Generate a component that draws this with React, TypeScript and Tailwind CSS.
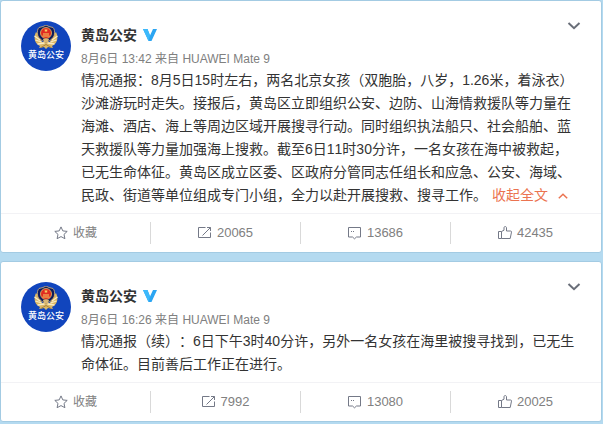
import type { ReactNode } from 'react'

type Post = {
  id: string
  time: string
  source: string
  text: string
  expanded?: boolean
  reposts: number
  comments: number
  likes: number
}

const author = '黄岛公安'

const posts: Post[] = [
  {
    id: 'first',
    time: '8月6日 13:42',
    source: 'HUAWEI Mate 9',
    text: '情况通报：8月5日15时左右，两名北京女孩（双胞胎，八岁，1.26米，着泳衣）沙滩游玩时走失。接报后，黄岛区立即组织公安、边防、山海情救援队等力量在海滩、酒店、海上等周边区域开展搜寻行动。同时组织执法船只、社会船舶、蓝天救援队等力量加强海上搜救。截至6日11时30分许，一名女孩在海中被救起，已无生命体征。黄岛区成立区委、区政府分管同志任组长和应急、公安、海域、民政、街道等单位组成专门小组，全力以赴开展搜救、搜寻工作。',
    expanded: true,
    reposts: 20065,
    comments: 13686,
    likes: 42435,
  },
  {
    id: 'second',
    time: '8月6日 16:26',
    source: 'HUAWEI Mate 9',
    text: '情况通报（续）：6日下午3时40分许，另外一名女孩在海里被搜寻找到，已无生命体征。目前善后工作正在进行。',
    reposts: 7992,
    comments: 13080,
    likes: 20025,
  },
]

function Icon({ children }: { children: ReactNode }) {
  return (
    <svg
      viewBox="0 0 14 14"
      className="h-3.5 w-3.5 shrink-0"
      fill="none"
      stroke="#747987"
      strokeWidth="1"
      aria-hidden="true"
    >
      {children}
    </svg>
  )
}

function StarIcon() {
  return (
    <Icon>
      <path d="M7 .9 8.800 4.900l4.400.5-3.200 3 .9 4.300L7 10.600l-3.900 2.100.9-4.300-3.200-3 4.400-.5z" strokeLinejoin="round" />
    </Icon>
  )
}

function RepostIcon() {
  return (
    <Icon>
      <path d="M7.500 1.500h-7v10h12v-5" />
      <path d="M9 1.500h3.500V5M12.500 1.500 4.500 9.500" />
    </Icon>
  )
}

function CommentIcon() {
  return (
    <Icon>
      <path d="M.5 1.500h12v9.500H8.500L6.500 12.800 4.500 11H.5z" />
      <path d="M3 5.500h1M5 5.500h1" />
    </Icon>
  )
}

function LikeIcon() {
  return (
    <Icon>
      <path d="M.5 5.500h3v7h-3zM3.500 5.500 6 4.200V2c0-1 .5-1.500 1.200-1.500S8.500 1 8.500 2v3h4c.8 0 1.100.5 1 1.100l-1.300 6.400H3.500" strokeLinejoin="round" />
    </Icon>
  )
}

function Avatar() {
  return (
    <a
      href="#profile"
      aria-label={author}
      className="flex h-[50px] w-[50px] shrink-0 flex-col items-center overflow-hidden rounded-full bg-[#1145bd] pt-1"
    >
      <svg viewBox="0 0 26 24" className="h-6 w-[26px] shrink-0" aria-hidden="true">
        {/* wheat wreath */}
        <path d="M3 7C0 13 2 19 7 21l-1 2 5-1 2 2 2-2 5 1-1-2c5-2 7-8 4-14l-3 3-3 7h-8L6 10z" fill="#dcb866" />
        <path d="M1.500 11l5.500 4M2.500 15l6 2M4.500 19l7-1M24.500 11 19 15M23.500 15l-6 2M21.500 19l-7-1" stroke="#f9ebc4" strokeWidth="1.300" />
        <path d="M8 22.500l5-3 5 3" fill="none" stroke="#a9813b" strokeWidth="1" />
        {/* shield */}
        <path d="M13 0 16 1.500 20 2.500c1.500 1.500 1.800 4 1.500 6.500-.5 4-4 6.500-8.500 8.500-4.500-2-8-4.500-8.500-8.500C4.200 6.500 4.500 4 6 2.500L10 1.500z" fill="#101c5c" stroke="#d9b775" strokeWidth=".8" />
        <circle cx="13" cy="8" r="5.500" fill="#e02a21" stroke="#e9c064" strokeWidth=".8" />
        <path d="M13 3.500l.6 1.300h1.400l-1.100.9.4 1.400-1.300-.8-1.300.8.400-1.400-1.100-.9h1.400zM10 8.500h6v1h-6zM9.500 10.500h7v1h-7z" fill="#f6cf62" />
        <path d="M10 14h6l-1 3h-4z" fill="#d9b775" />
      </svg>
      <span className="text-[9px] leading-3 font-medium whitespace-nowrap text-white">{author}</span>
    </a>
  )
}

function ActionButton({ icon, children }: { icon: ReactNode; children: ReactNode }) {
  return (
    <li className="flex-1 border-r border-[#d9d9d9] last:border-transparent">
      <button type="button" className="flex h-[22px] w-full items-center justify-center gap-[5px] text-[#808080]">
        {icon}
        {children}
      </button>
    </li>
  )
}

function PostCard({ post }: { post: Post }) {
  return (
    <article className="rounded-[3px] border border-[#a3cbe3] bg-white">
      <div className="flex gap-2.5 px-5 pt-5 pb-1.5">
        <Avatar />
        <div className="min-w-0 flex-1">
          <header className="flex items-start justify-between">
            <div className="flex h-7 items-center gap-1.5">
              <a href="#profile" className="text-sm leading-7 font-bold text-[#333]">
                {author}
              </a>
              <svg viewBox="0 0 14 12" className="h-3 w-3.5" role="img" aria-label="认证">
                <path d="M0 0h4.500L7 6.500 10 0h4L8.500 12h-3z" fill="#2ba5f2" />
                <path d="M0 0h4.500L7 6.500 5.500 12z" fill="#3cb9fb" />
              </svg>
            </div>
            <button type="button" aria-label="更多" className="py-px">
              <svg viewBox="0 0 14 8" className="h-2 w-3.5" fill="none" stroke="#696e78" strokeWidth="2">
                <path d="M1.500 1 7 6.200 12.500 1" />
              </svg>
            </button>
          </header>
          <p className="mt-px h-[19px] text-xs leading-[19px] text-[#808080]">
            <a href="#post">{post.time}</a> 来自 <a href="#source">{post.source}</a>
          </p>
          <div className="pr-1 text-sm leading-[23px] text-[#333] [font-kerning:none] [text-spacing-trim:space-all]">
            {post.text}
            {post.expanded && (
              <button type="button" className="ml-[5px] inline-flex h-[23px] items-center gap-2.5 align-top text-[#eb7350]">
                收起全文
                <svg
                  viewBox="0 0 10 6"
                  className="h-1.5 w-2.5"
                  fill="none"
                  stroke="#eb7350"
                  strokeWidth="1.500"
                  aria-hidden="true"
                >
                  <path d="M.8 5.200 5 1.200l4.200 4" />
                </svg>
              </button>
            )}
          </div>
        </div>
      </div>
      <ul className="flex border-t border-[#f2f2f5] py-2 text-[13px]">
        <ActionButton icon={<StarIcon />}>
          <span className="text-xs">收藏</span>
        </ActionButton>
        <ActionButton icon={<RepostIcon />}>{post.reposts}</ActionButton>
        <ActionButton icon={<CommentIcon />}>{post.comments}</ActionButton>
        <ActionButton icon={<LikeIcon />}>{post.likes}</ActionButton>
      </ul>
    </article>
  )
}

export default function App() {
  return (
    <main className="min-h-screen bg-[#b4daf0] pr-px font-['Liberation_Sans','Noto_Sans_CJK_SC',sans-serif]" lang="zh-CN">
      <div className="flex flex-col gap-2">
        {posts.map((post) => (
          <PostCard key={post.id} post={post} />
        ))}
      </div>
    </main>
  )
}
